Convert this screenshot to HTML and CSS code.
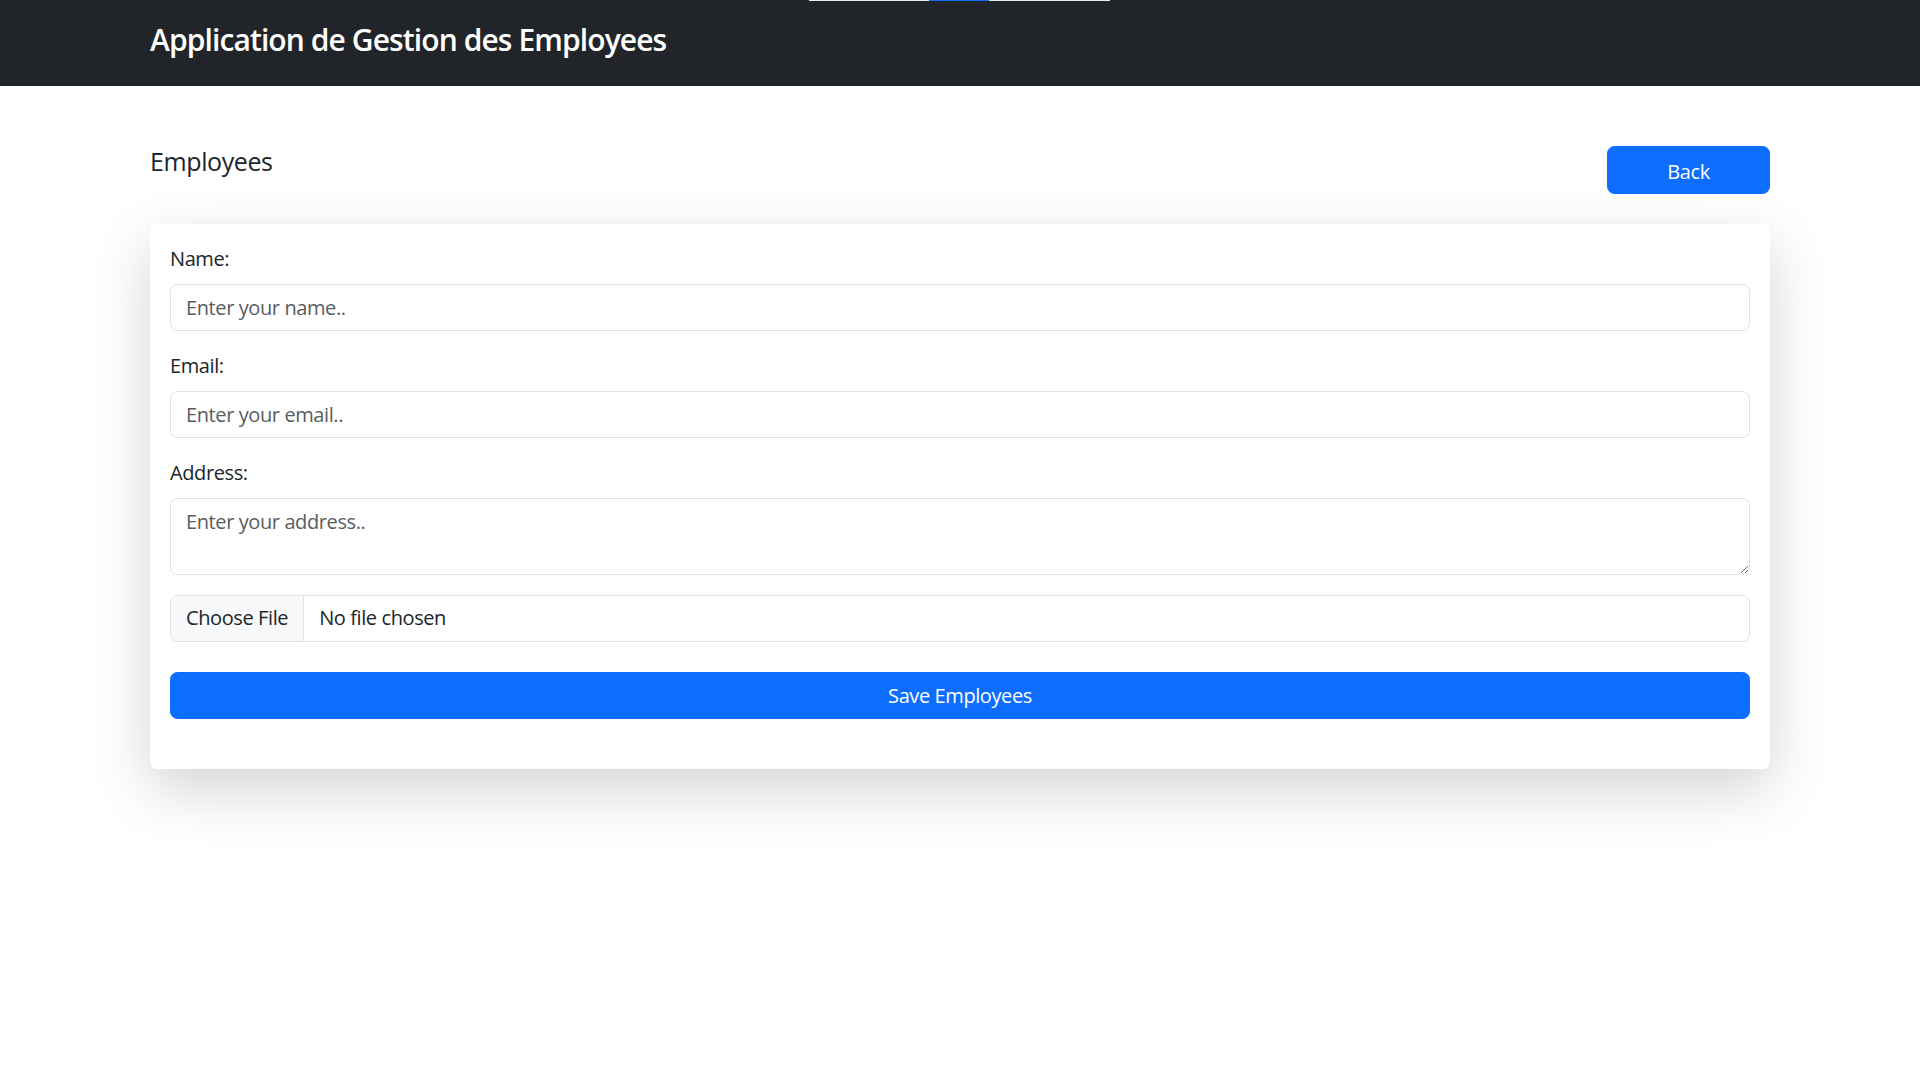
FILE: index.html
```html
<!DOCTYPE html>
<html lang="fr">
<head>
<meta charset="utf-8">
<title>Application de Gestion des Employees</title>
<link rel="stylesheet" href="styles.css">
</head>
<body>
<header class="navbar">
  <div class="loader"><span class="loader-track"></span><span class="loader-fill"></span><span class="loader-track loader-track-end"></span></div>
  <div class="container">
    <h1 class="brand">Application de Gestion des Employees</h1>
  </div>
</header>
<main class="container main">
  <div class="page-head">
    <h2 class="page-title">Employees</h2>
    <button class="btn btn-primary btn-back" type="button">Back</button>
  </div>
  <div class="card">
    <form class="form">
      <div class="field">
        <label class="label" for="name">Name:</label>
        <input class="control" id="name" type="text" placeholder="Enter your name..">
      </div>
      <div class="field">
        <label class="label" for="email">Email:</label>
        <input class="control" id="email" type="email" placeholder="Enter your email..">
      </div>
      <div class="field">
        <label class="label" for="address">Address:</label>
        <textarea class="control control-area" id="address" rows="2" placeholder="Enter your address.."></textarea>
      </div>
      <div class="field field-file">
        <label class="file-control">
          <span class="file-btn">Choose File</span>
          <span class="file-name">No file chosen</span>
        </label>
      </div>
      <button class="btn btn-primary btn-save" type="button">Save Employees</button>
    </form>
  </div>
</main>
</body>
</html>
```

FILE: styles.css
```css
* { box-sizing: border-box; }

html, body {
  margin: 0;
  padding: 0;
}

html {
  min-height: 100%;
}

body {
  min-height: 100vh;
  font-family: "Segoe UI", "Open Sans", "Noto Sans", sans-serif;
  font-size: 20px;
  line-height: 30px;
  letter-spacing: -0.02em;
  color: #212529;
  background: #ffffff;
}

.container {
  max-width: 1620px;
  margin: 0 auto;
}

.navbar {
  position: relative;
  background: #212529;
  height: 86px;
  padding-top: 22px;
}

.loader {
  position: absolute;
  top: 0;
  left: 809px;
  width: 301px;
  height: 1px;
  display: flex;
}

.loader-track {
  width: 120px;
  background: #e9ecef;
}

.loader-fill {
  width: 60px;
  background: #0d6efd;
}

.loader-track-end {
  width: 121px;
}

.brand {
  margin: 0;
  font-size: 30px;
  line-height: 36px;
  font-weight: 600;
  letter-spacing: -0.03em;
  color: #ffffff;
}

.main {
  padding-top: 60px;
  padding-bottom: 120px;
}

.page-head {
  display: flex;
  justify-content: space-between;
  align-items: flex-start;
  margin-bottom: 30px;
}

.page-title {
  margin: 0;
  font-size: 25px;
  line-height: 30px;
  font-weight: 500;
}

.btn {
  font-family: inherit;
  font-size: 20px;
  line-height: 30px;
  letter-spacing: -0.02em;
  border: 1px solid transparent;
  border-radius: 7.5px;
  cursor: pointer;
  padding: 8px 15px 7px;
}

.btn-primary {
  background: #0d6efd;
  border-color: #0d6efd;
  color: #ffffff;
}

.btn-back {
  width: 163px;
  height: 47.5px;
  padding-top: 9.5px;
  padding-bottom: 5.5px;
}

.card {
  background: #ffffff;
  border-radius: 7.5px;
  box-shadow: 0 20px 60px rgba(0, 0, 0, 0.175);
  padding: 20px 20px 50px;
}

.form {
  display: flex;
  flex-direction: column;
}

.field {
  margin-bottom: 20px;
}

.field-file {
  margin-bottom: 30px;
}

.label {
  display: block;
  margin-bottom: 10px;
}

.control {
  display: block;
  width: 100%;
  height: 47px;
  padding: 7.5px 15px;
  font-family: inherit;
  font-size: 20px;
  line-height: 30px;
  letter-spacing: -0.02em;
  color: #212529;
  background: #ffffff;
  border: 1px solid #dee2e6;
  border-radius: 7.5px;
  outline: none;
}

.control::placeholder {
  color: #595c5f;
  opacity: 1;
}

.control-area {
  height: 77px;
  padding-top: 8.5px;
  resize: vertical;
}

.file-control {
  display: flex;
  align-items: stretch;
  height: 47px;
  border: 1px solid #dee2e6;
  border-radius: 7.5px;
  overflow: hidden;
}

.file-btn {
  background: #f8f9fa;
  border-right: 1px solid #dee2e6;
  padding: 7.5px 15px;
  color: #212529;
}

.file-name {
  padding: 7.5px 15px;
  color: #212529;
}

.btn-save {
  width: 100%;
  height: 47px;
}
```
